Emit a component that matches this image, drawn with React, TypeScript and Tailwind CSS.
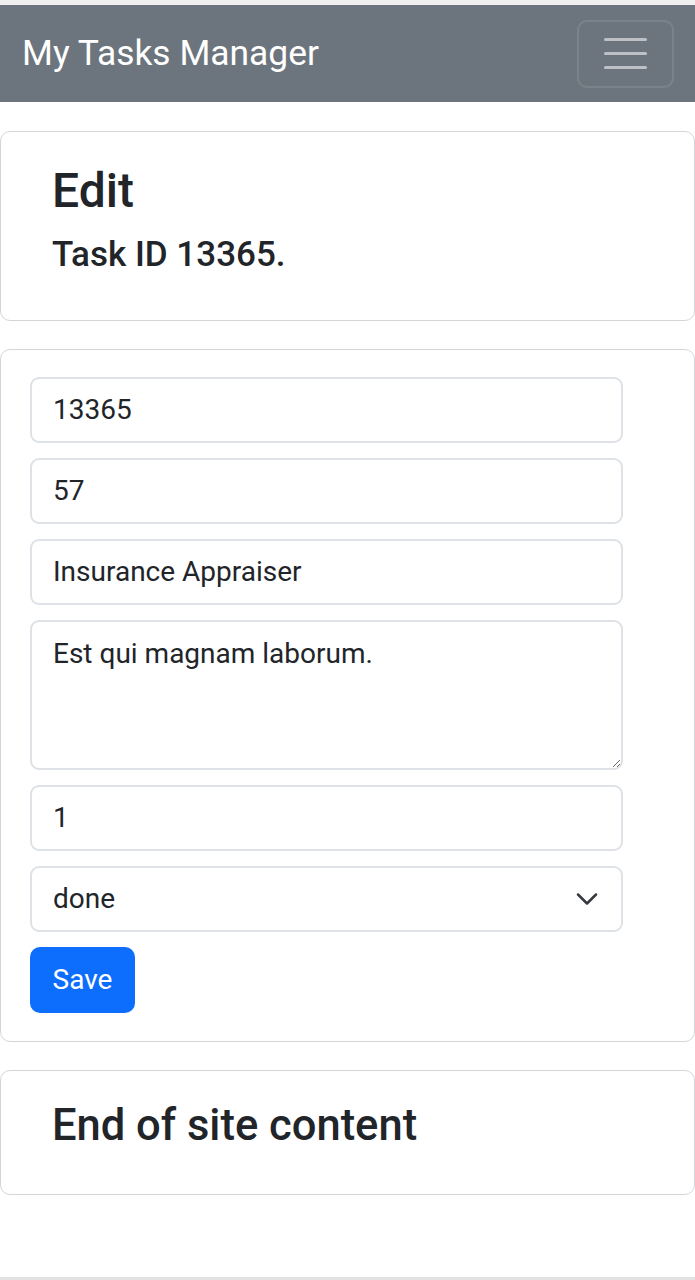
import React from 'react';

const font = { fontFamily: 'Roboto, "Noto Sans", sans-serif' };

function Card({ children, className = '' }: { children: React.ReactNode; className?: string }) {
  return (
    <div className={`border border-[#d3d6d9] rounded-[10px] bg-white ${className}`}>{children}</div>
  );
}

const inputCls =
  'block w-[593px] h-[66px] border-2 border-[#dee2e6] rounded-[9px] px-[21px] text-[28px] text-[#212529] bg-white outline-none';

export default function App() {
  return (
    <div className="w-[695px] bg-white text-[#212529]" style={font}>
      <div className="h-[5px] bg-[#efefef]" />
      <nav className="h-[97px] bg-[#6c757d] flex items-center justify-between pl-[22px] pr-[21px]">
        <span className="text-[35.4px] text-white leading-[1.5]">My Tasks Manager</span>
        <button className="w-[97px] h-[68px] border-2 border-white/10 rounded-[10px] flex flex-col items-center justify-center gap-[11px]">
          <span className="block w-[43px] h-[3px] rounded bg-white/55" />
          <span className="block w-[43px] h-[3px] rounded bg-white/55" />
          <span className="block w-[43px] h-[3px] rounded bg-white/55" />
        </button>
      </nav>

      <div className="pt-[29px]">
        <Card className="pt-[30px] pb-[30px] pl-[51px] pr-[28px]">
          <h1 className="text-[48px] font-medium leading-[1.2] mb-[14px]">Edit</h1>
          <h5 className="text-[35px] font-medium leading-[1.2] mb-[14px]">Task ID 13365.</h5>
        </Card>

        <Card className="mt-[28px] pt-[27px] pb-[28px] px-[29px] flex flex-col gap-[15px]">
          <input className={inputCls} defaultValue="13365" />
          <input className={inputCls} defaultValue="57" />
          <input className={inputCls} defaultValue="Insurance Appraiser" />
          <textarea
            className="block w-[593px] h-[150px] border-2 border-[#dee2e6] rounded-[9px] px-[21px] py-[11px] text-[28px] leading-[1.5] text-[#212529] outline-none"
            defaultValue="Est qui magnam laborum."
          />
          <input className={inputCls} defaultValue="1" />
          <div className="relative w-[593px]">
            <select className={`${inputCls} appearance-none`} defaultValue="done">
              <option value="todo">todo</option>
              <option value="doing">doing</option>
              <option value="done">done</option>
            </select>
            <svg
              className="absolute right-[24px] top-[24px] pointer-events-none"
              width="24"
              height="18"
              viewBox="0 0 16 12"
              fill="none"
              stroke="#343a40"
              strokeWidth="1.7"
              strokeLinecap="round"
              strokeLinejoin="round"
            >
              <path d="m2 3 6 6 6-6" />
            </svg>
          </div>
          <button className="w-[105px] h-[66px] rounded-[10px] bg-[#0d6efd] text-white text-[28px]">Save</button>
        </Card>

        <Card className="mt-[28px] pt-[29px] pb-[28px] pl-[51px] pr-[28px]">
          <h2 className="text-[43.5px] font-medium leading-[1.2] mb-[14px]">End of site content</h2>
        </Card>
      </div>

      <div className="h-[82px]" />
      <div className="h-[3px] bg-[#e2e2e2]" />
    </div>
  );
}
